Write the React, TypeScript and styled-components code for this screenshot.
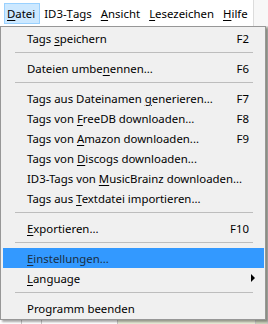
import styled, { createGlobalStyle } from "styled-components";

const GlobalStyle = createGlobalStyle`
    html, body {
        margin: 0;
        padding: 0;
        width: 268px;
        height: 324px;
        overflow: hidden;
        background: #f7f7f7;
    }
    body {
        font-family: "Noto Sans", "Liberation Sans", sans-serif;
        font-size: 11.4px;
        color: #000;
    }
`;

const Window = styled.div`
    position: relative;
    width: 268px;
    height: 324px;
    display: flex;
    flex-direction: column;
`;

const MenuBar = styled.div`
    height: 26px;
    width: 254px;
    box-sizing: border-box;
    display: flex;
    align-items: flex-start;
    padding: 3px 0 0 4px;
    background: #fff;
    border-right: 1px solid #dcdcdc;
`;

const BarItem = styled.div<{ active?: boolean }>`
    height: 21px;
    box-sizing: border-box;
    display: flex;
    align-items: center;
    padding: 0 4px 0 2px;
    margin-right: 1px;
    border: 1px solid ${(p) => (p.active ? "#99d1ff" : "transparent")};
    background: ${(p) => (p.active ? "#cce8ff" : "transparent")};
    white-space: nowrap;
`;

const U = styled.span`
    text-decoration: underline;
    text-underline-offset: 2px;
`;

const Content = styled.div`
    flex: 1;
    background: #fff;
    display: grid;
    grid-template-columns: 22px 20px 76px 1fr 12px;
    border-top: 1px solid #dcdcdc;
`;

const Cell = styled.div<{ tone?: string }>`
    border-right: 1px solid #c8c8c8;
    background: ${(p) => p.tone || "transparent"};
`;

const Popup = styled.div`
    position: absolute;
    left: 0;
    top: 26px;
    width: 266px;
    box-sizing: border-box;
    padding: 1px 1px 1px 2px;
    background: #f0f0f0;
    border: 1px solid #979797;
    box-shadow: 2px 2px 2px rgba(0, 0, 0, 0.35);
    display: flex;
    flex-direction: column;
`;

const Item = styled.div<{ hot?: boolean }>`
    height: 20px;
    display: flex;
    align-items: center;
    justify-content: space-between;
    padding: 0 15px 0 24px;
    background: ${(p) => (p.hot ? "#3399ff" : "transparent")};
    color: ${(p) => (p.hot ? "#1a2f45" : "#000")};
    white-space: nowrap;
`;

const Key = styled.span`
    text-align: right;
`;

const Arrow = styled.span`
    width: 0;
    height: 0;
    margin-right: -6px;
    border-top: 4px solid transparent;
    border-bottom: 4px solid transparent;
    border-left: 4px solid #000;
`;

const Separator = styled.div`
    height: 10px;
    display: flex;
    align-items: center;
    padding: 0 11px 0 12px;
    &::after {
        content: "";
        flex: 1;
        height: 1px;
        background: #bdbdbd;
        margin-top: -1px;
    }
`;

type Entry =
    | { sep: true }
    | { pre: string; key: string; post: string; short?: string; hot?: boolean; sub?: boolean };

const entries: Entry[] = [
    { pre: "Tags ", key: "s", post: "peichern", short: "F2" },
    { sep: true },
    { pre: "Dateien umbe", key: "n", post: "ennen...", short: "F6" },
    { sep: true },
    { pre: "Tags aus Dateinamen ", key: "g", post: "enerieren...", short: "F7" },
    { pre: "Tags von ", key: "F", post: "reeDB downloaden...", short: "F8" },
    { pre: "Tags von ", key: "A", post: "mazon downloaden...", short: "F9" },
    { pre: "Tags von ", key: "D", post: "iscogs downloaden..." },
    { pre: "ID3-Tags von ", key: "M", post: "usicBrainz downloaden..." },
    { pre: "Tags aus ", key: "T", post: "extdatei importieren..." },
    { sep: true },
    { pre: "", key: "E", post: "xportieren...", short: "F10" },
    { sep: true },
    { pre: "", key: "E", post: "instellungen...", hot: true },
    { pre: "", key: "L", post: "anguage", sub: true },
    { sep: true },
    { pre: "Programm beenden", key: "", post: "" },
];

function App() {
    return (
        <>
            <GlobalStyle />
            <Window>
                <MenuBar>
                    <BarItem active><U>D</U>atei</BarItem>
                    <BarItem>ID3-<U>T</U>ags</BarItem>
                    <BarItem><U>A</U>nsicht</BarItem>
                    <BarItem><U>L</U>esezeichen</BarItem>
                    <BarItem><U>H</U>ilfe</BarItem>
                </MenuBar>
                <Content>
                    <Cell />
                    <Cell />
                    <Cell />
                    <Cell tone="#e9ecd8" />
                    <Cell tone="#cfd6bf" />
                </Content>
                <Popup>
                    {entries.map((e, i) =>
                        "sep" in e ? (
                            <Separator key={i} />
                        ) : (
                            <Item key={i} hot={e.hot}>
                                <span>
                                    {e.pre}
                                    {e.key && <U>{e.key}</U>}
                                    {e.post}
                                </span>
                                {e.short && <Key>{e.short}</Key>}
                                {e.sub && <Arrow />}
                            </Item>
                        )
                    )}
                </Popup>
            </Window>
        </>
    );
}

export default App;
